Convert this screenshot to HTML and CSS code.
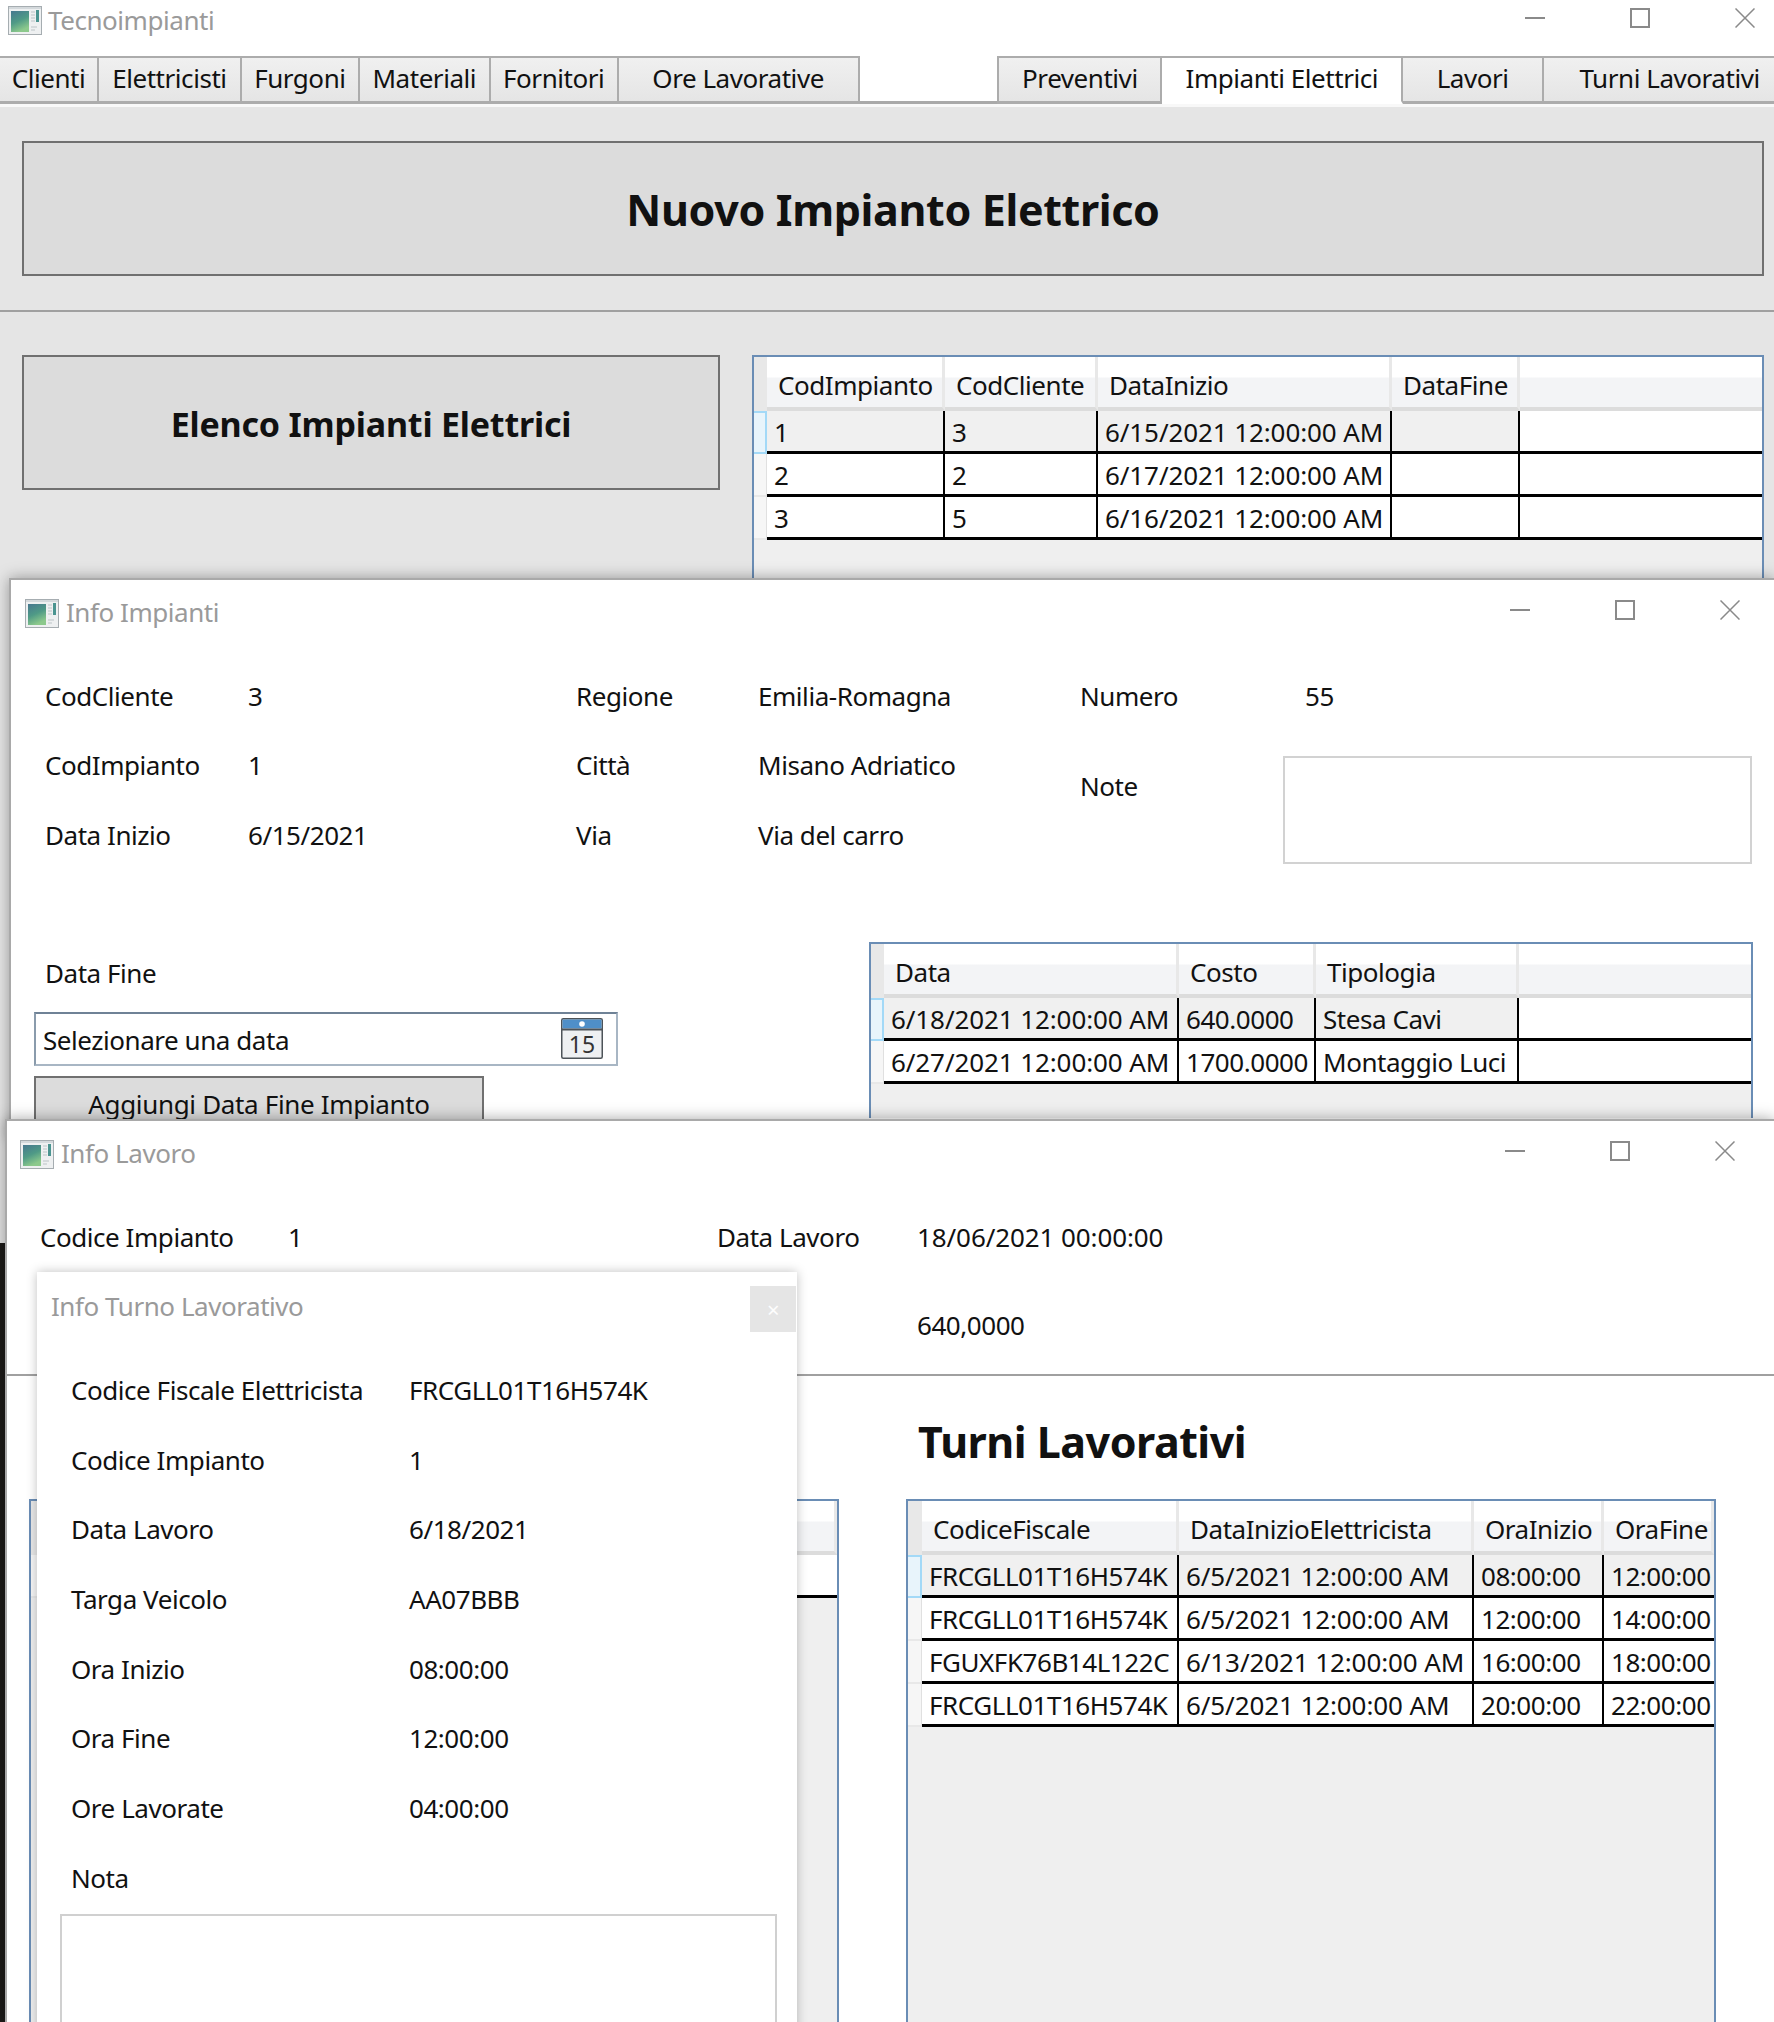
FILE: index.html
```html
<!DOCTYPE html>
<html lang="it">
<head>
    <meta charset="utf-8">
    <title>Tecnoimpianti</title>
    <link rel="stylesheet" href="styles.css">
</head>
<body>

    <svg class="defs" width="0" height="0">
        <defs>
            <linearGradient id="panel" x1="0" y1="0" x2="0.4" y2="1">
                <stop offset="0" stop-color="#46778f"/>
                <stop offset="0.55" stop-color="#4f9a86"/>
                <stop offset="1" stop-color="#8cc98c"/>
            </linearGradient>
            <symbol id="app-icon" viewBox="0 0 34 29">
                <rect x="0.5" y="0.5" width="33" height="28" fill="#eef0f1" stroke="#a6adb1"/>
                <rect x="1" y="1" width="32" height="2" fill="#d4d9dc"/>
                <rect x="3" y="5" width="18" height="21" fill="url(#panel)"/>
                <rect x="28" y="4" width="3" height="12" fill="#4a9490"/>
                <path d="M23 6h4M23 9h4M23 12h4M23 15h4M23 21h6M23 24h4" stroke="#bcc3c7" stroke-width="1.2"/>
            </symbol>
            <symbol id="win-min" viewBox="0 0 20 20">
                <path d="M0 10h20" stroke="#8a8a8a" stroke-width="2"/>
            </symbol>
            <symbol id="win-max" viewBox="0 0 20 20">
                <rect x="1" y="1" width="18" height="18" fill="none" stroke="#8a8a8a" stroke-width="2"/>
            </symbol>
            <symbol id="win-close" viewBox="0 0 20 20">
                <path d="M0.5 0.5l19 19M19.5 0.5l-19 19" stroke="#8a8a8a" stroke-width="1.5"/>
            </symbol>
        </defs>
    </svg>

    <!-- Finestra principale -->
    <div class="window main-window">
        <div class="titlebar">
            <svg class="app-icon"><use href="#app-icon"/></svg>
            <span class="title">Tecnoimpianti</span>
            <div class="controls">
                <svg class="ctl-min"><use href="#win-min"/></svg>
                <svg class="ctl-max"><use href="#win-max"/></svg>
                <svg class="ctl-close"><use href="#win-close"/></svg>
            </div>
        </div>

        <div class="tabbar">
            <div class="tab tab-clienti">Clienti</div>
            <div class="tab tab-elettricisti">Elettricisti</div>
            <div class="tab tab-furgoni">Furgoni</div>
            <div class="tab tab-materiali">Materiali</div>
            <div class="tab tab-fornitori">Fornitori</div>
            <div class="tab tab-ore">Ore Lavorative</div>
            <div class="tab-spacer"></div>
            <div class="tab tab-preventivi">Preventivi</div>
            <div class="tab tab-impianti active">Impianti Elettrici</div>
            <div class="tab tab-lavori">Lavori</div>
            <div class="tab tab-turni">Turni Lavorativi</div>
        </div>

        <div class="main-content">
            <div class="banner-row">
                <div class="banner banner-big">Nuovo Impianto Elettrico</div>
            </div>
            <div class="list-row">
                <div class="banner banner-small">Elenco Impianti Elettrici</div>
                <div class="grid grid-impianti">
                    <table>
                        <colgroup><col><col><col><col><col><col></colgroup>
                        <thead>
                            <tr><th class="sel"></th><th>CodImpianto</th><th>CodCliente</th><th>DataInizio</th><th>DataFine</th><th class="fill"></th></tr>
                        </thead>
                        <tbody>
                            <tr class="current"><td class="sel"></td><td>1</td><td>3</td><td class="date">6/15/2021 12:00:00 AM</td><td></td><td class="fill"></td></tr>
                            <tr><td class="sel"></td><td>2</td><td>2</td><td class="date">6/17/2021 12:00:00 AM</td><td></td><td class="fill"></td></tr>
                            <tr><td class="sel"></td><td>3</td><td>5</td><td class="date">6/16/2021 12:00:00 AM</td><td></td><td class="fill"></td></tr>
                        </tbody>
                    </table>
                </div>
            </div>
        </div>
    </div>

    <!-- Info Impianti -->
    <div class="window info-impianti">
        <div class="titlebar">
            <svg class="app-icon"><use href="#app-icon"/></svg>
            <span class="title">Info Impianti</span>
            <div class="controls">
                <svg class="ctl-min"><use href="#win-min"/></svg>
                <svg class="ctl-max"><use href="#win-max"/></svg>
                <svg class="ctl-close"><use href="#win-close"/></svg>
            </div>
        </div>

        <div class="impianto-fields">
            <span>CodCliente</span><span>3</span><span>Regione</span><span>Emilia-Romagna</span><span>Numero</span><span class="numero">55</span>
            <span>CodImpianto</span><span>1</span><span>Città</span><span>Misano Adriatico</span>
            <span>Data Inizio</span><span>6/15/2021</span><span>Via</span><span>Via del carro</span>
            <span class="note-label">Note</span><div class="note-box"></div>
        </div>

        <div class="impianto-lower">
            <div class="data-fine">
                <div class="data-fine-label">Data Fine</div>
                <div class="datepicker">
                    <span class="datepicker-text">Selezionare una data</span>
                    <svg class="cal-icon" viewBox="0 0 42 41">
                        <rect x="0.75" y="0.75" width="40.5" height="39.5" rx="1.5" fill="#eef0f2" stroke="#4d5358" stroke-width="1.5"/>
                        <rect x="1.5" y="1.5" width="39" height="9" fill="#4f8fc8"/>
                        <rect x="1" y="10.5" width="40" height="2" fill="#4d5358"/>
                        <circle cx="21" cy="6" r="2.8" fill="#fff"/>
                        <text x="21" y="35" class="cal-day" text-anchor="middle">15</text>
                    </svg>
                </div>
                <div class="banner banner-button">Aggiungi Data Fine Impianto</div>
            </div>
            <div class="grid grid-lavori">
                <table>
                    <colgroup><col><col><col><col><col></colgroup>
                    <thead>
                        <tr><th class="sel"></th><th>Data</th><th>Costo</th><th>Tipologia</th><th class="fill"></th></tr>
                    </thead>
                    <tbody>
                        <tr class="current"><td class="sel"></td><td class="date">6/18/2021 12:00:00 AM</td><td>640.0000</td><td>Stesa Cavi</td><td class="fill"></td></tr>
                        <tr><td class="sel"></td><td class="date">6/27/2021 12:00:00 AM</td><td>1700.0000</td><td>Montaggio Luci</td><td class="fill"></td></tr>
                    </tbody>
                </table>
            </div>
        </div>
    </div>

    <!-- Info Lavoro -->
    <div class="window info-lavoro">
        <div class="titlebar">
            <svg class="app-icon"><use href="#app-icon"/></svg>
            <span class="title">Info Lavoro</span>
            <div class="controls">
                <svg class="ctl-min"><use href="#win-min"/></svg>
                <svg class="ctl-max"><use href="#win-max"/></svg>
                <svg class="ctl-close"><use href="#win-close"/></svg>
            </div>
        </div>

        <div class="lavoro-fields">
            <span>Codice Impianto</span><span>1</span><span>Data Lavoro</span><span class="date">18/06/2021 00:00:00</span>
            <span class="costo-value">640,0000</span>
        </div>

        <div class="lavoro-lower">
            <div class="grid grid-hidden">
                <table>
                    <colgroup><col><col></colgroup>
                    <thead><tr><th class="sel"></th><th></th></tr></thead>
                    <tbody><tr><td class="sel"></td><td></td></tr></tbody>
                </table>
            </div>
            <div class="turni">
                <h2>Turni Lavorativi</h2>
                <div class="grid grid-turni">
                    <table>
                        <colgroup><col><col><col><col><col></colgroup>
                        <thead>
                            <tr><th class="sel"></th><th>CodiceFiscale</th><th>DataInizioElettricista</th><th>OraInizio</th><th>OraFine</th></tr>
                        </thead>
                        <tbody>
                            <tr class="current"><td class="sel"></td><td>FRCGLL01T16H574K</td><td class="date">6/5/2021 12:00:00 AM</td><td>08:00:00</td><td class="last">12:00:00</td></tr>
                            <tr><td class="sel"></td><td>FRCGLL01T16H574K</td><td class="date">6/5/2021 12:00:00 AM</td><td>12:00:00</td><td class="last">14:00:00</td></tr>
                            <tr><td class="sel"></td><td>FGUXFK76B14L122C</td><td class="date">6/13/2021 12:00:00 AM</td><td>16:00:00</td><td class="last">18:00:00</td></tr>
                            <tr><td class="sel"></td><td>FRCGLL01T16H574K</td><td class="date">6/5/2021 12:00:00 AM</td><td>20:00:00</td><td class="last">22:00:00</td></tr>
                        </tbody>
                    </table>
                </div>
            </div>
        </div>

        <!-- Info Turno Lavorativo -->
        <div class="dialog">
            <div class="dialog-head">
                <span class="title">Info Turno Lavorativo</span>
                <div class="dialog-close">×</div>
            </div>
            <div class="turno-fields">
                <span>Codice Fiscale Elettricista</span><span>FRCGLL01T16H574K</span>
                <span>Codice Impianto</span><span>1</span>
                <span>Data Lavoro</span><span>6/18/2021</span>
                <span>Targa Veicolo</span><span>AA07BBB</span>
                <span>Ora Inizio</span><span>08:00:00</span>
                <span>Ora Fine</span><span>12:00:00</span>
                <span>Ore Lavorate</span><span>04:00:00</span>
                <span>Nota</span>
            </div>
            <div class="nota-box"></div>
        </div>
    </div>

</body>
</html>
```

FILE: styles.css
```css
* {
    box-sizing: border-box;
}

html, body {
    margin: 0;
    padding: 0;
}

body {
    width: 1774px;
    height: 2022px;
    position: relative;
    overflow: hidden;
    background-color: #1c1a18;
    font-family: "Noto Sans", sans-serif;
    font-size: 26px;
    letter-spacing: -0.45px;
    color: #111;
}

.defs {
    position: absolute;
}

/* finestre */
.window {
    position: absolute;
    background-color: #fff;
    overflow: hidden;
}

.main-window {
    left: 0;
    top: 0;
    width: 1774px;
    height: 1243px;
    background-color: #e5e5e5;
}

.info-impianti {
    left: 9px;
    top: 578px;
    width: 1765px;
    height: 560px;
    border-top: 2px solid #a9a9a9;
    border-left: 2px solid #a9a9a9;
    box-shadow: 0 0 14px rgba(0, 0, 0, 0.35);
    overflow: visible;
}

.info-lavoro {
    left: 5px;
    top: 1119px;
    width: 1769px;
    height: 903px;
    border-top: 2px solid #a9a9a9;
    border-left: 2px solid #a9a9a9;
    box-shadow: 0 0 14px rgba(0, 0, 0, 0.35);
    overflow: visible;
}

.titlebar {
    display: flex;
    align-items: center;
    background-color: #fff;
}

.main-window .titlebar {
    height: 56px;
    padding: 0 0 16px 8px;
}

.info-impianti .titlebar {
    height: 80px;
    padding: 0 0 14px 14px;
}

.info-lavoro .titlebar {
    height: 80px;
    padding: 0 0 14px 13px;
}

.app-icon {
    width: 34px;
    height: 29px;
    flex-shrink: 0;
}

.title {
    margin-left: 7px;
    margin-bottom: 2px;
    color: #9a9a9a;
}

.main-window .title {
    margin-left: 6px;
    margin-bottom: 0;
}

.controls {
    margin-left: auto;
    margin-bottom: 6px;
    display: flex;
    align-items: center;
}

.controls svg {
    width: 20px;
    height: 20px;
}

.main-window .controls {
    margin-bottom: 4px;
    padding-right: 19px;
}

.info-impianti .controls {
    padding-right: 34px;
}

.info-lavoro .controls {
    padding-right: 39px;
}

.ctl-max {
    margin: 0 85px;
}

/* schede */
.tabbar {
    display: flex;
    height: 48px;
    background-color: #fff;
    border-bottom: 3px solid #a9a9a9;
}

.tab {
    height: 48px;
    display: flex;
    align-items: center;
    justify-content: center;
    padding-bottom: 4px;
    border: 2px solid #acacac;
    border-bottom: 3px solid #acacac;
    border-left-width: 0;
    background: linear-gradient(#f0f0f0, #e5e5e5);
}

.tab-clienti { width: 99px; }
.tab-elettricisti { width: 143px; }
.tab-furgoni { width: 118px; }
.tab-materiali { width: 131px; }
.tab-fornitori { width: 128px; }
.tab-ore { width: 241px; }
.tab-spacer { width: 138px; }
.tab-preventivi { width: 165px; border-left-width: 2px; }
.tab-impianti { width: 241px; }
.tab-lavori { width: 141px; }
.tab-turni { width: 230px; border-right: 0; padding-left: 21px; }

.tab.active {
    background: #fff;
    border-bottom-color: #fff;
    border-top-color: #acacac;
}

.main-content {
    border-top: 3px solid #f8f8f8;
    background-color: #e5e5e5;
}

.banner {
    display: flex;
    align-items: center;
    justify-content: center;
    background-color: #dcdcdc;
    border: 2px solid #707070;
    font-weight: 700;
}

.banner-row {
    padding: 34px 10px 35px 22px;
    height: 205px;
    border-bottom: 2px solid #a0a0a0;
}

.banner-big {
    height: 135px;
    padding-top: 2px;
    font-size: 43px;
    letter-spacing: -0.35px;
}

.list-row {
    display: flex;
    align-items: flex-start;
    padding: 43px 10px 0 22px;
    gap: 32px;
}

.banner-small {
    width: 698px;
    height: 135px;
    padding-top: 2px;
    flex-shrink: 0;
    font-size: 34px;
    letter-spacing: -0.2px;
}

/* griglie dati */
.grid {
    border: 2px solid #6a8db5;
    border-bottom: 0;
    background-color: #efefef;
    overflow: hidden;
}

.grid table {
    border-collapse: separate;
    border-spacing: 0;
    table-layout: fixed;
}

.grid th {
    height: 54px;
    padding: 6px 0 0 11px;
    text-align: left;
    font-weight: 400;
    background: linear-gradient(#fff 40%, #f3f4f6 42%);
    border-right: 3px solid #e8e8e8;
    border-bottom: 4px solid #dcdcdc;
}

.grid td {
    height: 43px;
    padding: 2px 0 0 7px;
    white-space: nowrap;
    overflow: hidden;
    background-color: #fff;
    border-right: 2px solid #000;
    border-bottom: 3px solid #000;
}

.grid-impianti td {
    padding-top: 1px;
}

.grid td.last {
    border-right: 0;
}

.date, .grid td.date {
    letter-spacing: -0.1px;
}

.grid th.sel {
    padding: 0;
    background: #e8e8e8;
    border-right: 0;
    border-bottom: 0;
}

.grid td.sel {
    padding: 0;
    background: #f6f6f6;
    border-right: 1px solid #e0e0e0;
    border-bottom: 2px solid #e8e8e8;
}

.grid tr.current td {
    background-color: #f0f0f0;
}

.grid tr.current td.sel {
    background-color: #e8f4fb;
    border: 2px solid #a3d9f7;
    border-left: 0;
}

.grid tr.current td.fill {
    background-color: #fff;
}

.grid th.fill {
    border-right: 0;
}

.grid td.fill {
    border-right: 0;
}

.grid-impianti {
    flex: 1;
    height: 240px;
}

.grid-impianti table { width: 1008px; }
.grid-impianti col:nth-child(1) { width: 13px; }
.grid-impianti col:nth-child(2) { width: 178px; }
.grid-impianti col:nth-child(3) { width: 153px; }
.grid-impianti col:nth-child(4) { width: 294px; }
.grid-impianti col:nth-child(5) { width: 128px; }
.grid-impianti col:nth-child(6) { width: 242px; }

/* Info Impianti */
.impianto-fields {
    display: grid;
    grid-template-columns: 203px 328px 182px 322px 203px 469px;
    grid-template-rows: repeat(3, 69.5px);
    align-items: center;
    padding-left: 34px;
    padding-top: 1px;
}

.numero {
    padding-left: 22px;
}

.note-label {
    grid-column: 5;
    grid-row: 2 / span 2;
    align-self: start;
    margin-top: 37px;
}

.note-box {
    grid-column: 6;
    grid-row: 2 / span 2;
    align-self: start;
    height: 108px;
    margin-top: 25px;
    background-color: #fff;
    border: 2px solid #d2d2d2;
}

.impianto-lower {
    display: flex;
    align-items: flex-start;
    margin-top: 72px;
    padding-left: 23px;
}

.data-fine {
    width: 835px;
}

.data-fine-label {
    padding: 13px 0 0 11px;
    height: 70px;
}

.datepicker {
    width: 584px;
    height: 54px;
    display: flex;
    align-items: center;
    justify-content: space-between;
    padding: 0 13px 0 7px;
    border: 2px solid;
    border-color: #6f8296 #a8b6c4 #a8b6c4 #8a9bac;
}

.datepicker-text {
    padding-top: 2px;
}

.cal-icon {
    width: 42px;
    height: 41px;
    flex-shrink: 0;
}

.cal-day {
    font-family: "Noto Sans", sans-serif;
    font-size: 23px;
    letter-spacing: 0;
    fill: #333;
}

.banner-button {
    width: 450px;
    height: 60px;
    margin-top: 10px;
    padding-bottom: 3px;
    font-weight: 400;
    letter-spacing: -0.33px;
    border-color: #707070;
}

.grid-lavori {
    width: 884px;
    height: 176px;
    position: relative;
}

.grid-lavori table { width: 880px; }
.grid-lavori col:nth-child(1) { width: 13px; }
.grid-lavori col:nth-child(2) { width: 295px; }
.grid-lavori col:nth-child(3) { width: 137px; }
.grid-lavori col:nth-child(4) { width: 203px; }
.grid-lavori col:nth-child(5) { width: 232px; }

/* Info Lavoro */
.lavoro-fields {
    display: grid;
    grid-template-columns: 248px 429px 200px 1fr;
    grid-auto-rows: 44px;
    row-gap: 44px;
    align-items: center;
    padding-left: 33px;
    height: 161px;
    margin-top: 14px;
    border-bottom: 2px solid #a0a0a0;
}

.costo-value {
    grid-column: 4;
}

.lavoro-lower {
    display: flex;
    align-items: flex-start;
    padding-left: 22px;
}

.grid-hidden {
    width: 810px;
    height: 540px;
    margin-top: 123px;
}

.grid-hidden table { width: 806px; }
.grid-hidden col:nth-child(1) { width: 14px; }
.grid-hidden col:nth-child(2) { width: 792px; }

.grid-hidden td {
    border-right: 0;
}

.turni {
    margin-left: 67px;
}

.turni h2 {
    margin: 41px 0 32px 12px;
    font-size: 43px;
    line-height: 50px;
    font-weight: 700;
    letter-spacing: -0.5px;
}

.grid-turni {
    width: 810px;
    height: 540px;
}

.grid-turni table { width: 806px; }
.grid-turni col:nth-child(1) { width: 14px; }
.grid-turni col:nth-child(2) { width: 257px; }
.grid-turni col:nth-child(3) { width: 295px; }
.grid-turni col:nth-child(4) { width: 130px; }
.grid-turni col:nth-child(5) { width: 110px; }

/* Info Turno Lavorativo */
.dialog {
    position: absolute;
    left: 30px;
    top: 151px;
    width: 760px;
    height: 760px;
    background-color: #fff;
    box-shadow: 0 0 10px rgba(0, 0, 0, 0.25);
}

.dialog-head {
    display: flex;
    justify-content: space-between;
    align-items: flex-start;
    height: 83px;
    padding: 14px 1px 0 14px;
}

.dialog-head .title {
    margin: 0;
    line-height: 40px;
}

.dialog-close {
    width: 46px;
    height: 46px;
    background-color: #e5e5e5;
    color: #fdfdfd;
    text-align: center;
    line-height: 46px;
    font-size: 22px;
}

.turno-fields {
    display: grid;
    grid-template-columns: 338px 1fr;
    grid-auto-rows: 69.7px;
    align-items: center;
    padding-left: 34px;
}

.nota-box {
    width: 717px;
    height: 200px;
    margin: 1px 0 0 23px;
    border: 2px solid #d0d0d0;
}
```
